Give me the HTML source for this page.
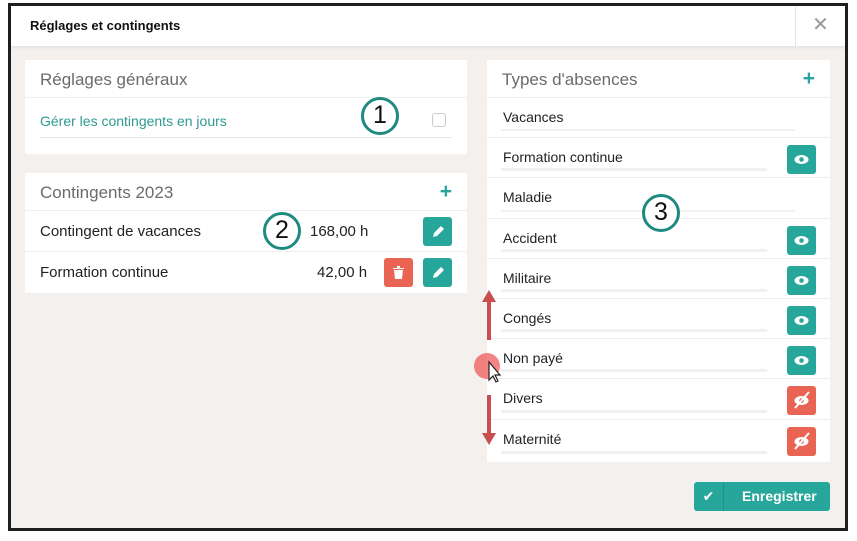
<!DOCTYPE html>
<html><head><meta charset="utf-8"><style>
*{box-sizing:border-box;margin:0;padding:0}
body{width:857px;height:541px;background:#fff;position:relative;font-family:"Liberation Sans","DejaVu Sans",sans-serif;overflow:hidden}
.frame{position:absolute;left:8px;top:3px;width:840px;height:528px;border:3px solid #1e1e1e;background:#f3f0ed}
.hdr{position:absolute;left:0;top:0;right:0;height:40px;background:#fff;box-shadow:0 2px 3px rgba(0,0,0,.06)}
.hdr .t{position:absolute;left:19px;top:12px;font-size:13px;font-weight:bold;color:#111}
.hdr .x{position:absolute;right:0;top:0;width:50px;height:40px;border-left:1px solid #e6e6e6;color:#999;font-size:20px;text-align:center;line-height:38px;font-weight:bold}
.p{position:absolute;background:#fff}
.pt{height:38px;border-bottom:1px solid #eee;font-size:17px;color:#6b6b6b;padding:10px 15px;position:relative}
.plus{position:absolute;right:15px;top:7px;color:#27a79c;font-size:21px;font-weight:bold}
.row{height:41px;border-bottom:1px solid #eee;position:relative;font-size:15px;color:#222}
.row span.l{position:absolute;left:15px;top:12px}
.btn{position:absolute;width:29px;height:29px;border-radius:3px;background:#27a79c}
.red{background:#e96453}
.tr{height:40.2px;border-bottom:1px solid #eee;position:relative;font-size:14px;color:#222}
.tr span{position:absolute;left:16px;top:11px}
.tr .ul{position:absolute;left:14px;bottom:6px;height:3px;background:#f1f1f1;width:266px}
.tr .btn{right:14px;top:7px}
.circ{position:absolute;width:38px;height:38px;border:3px solid #1e8a80;border-radius:50%;background:#fff;font-size:25px;text-align:center;line-height:31px;color:#111}
</style></head><body>
<div class="frame">
<div class="hdr"><div class="t">Réglages et contingents</div><div class="x">✕</div></div>

<div class="p" style="left:14px;top:54px;width:442px;height:94px">
<div class="pt">Réglages généraux</div>
<div style="position:relative;height:55px">
<span style="position:absolute;left:15px;top:15px;font-size:14px;color:#2d9a90">Gérer les contingents en jours</span>
<div style="position:absolute;left:15px;right:15px;top:39px;height:1px;background:#e8e8e8"></div>
<div style="position:absolute;left:407px;top:15px;width:14px;height:14px;border:1px solid #ccc;border-radius:3px"></div>
</div></div>

<div class="p" style="left:14px;top:167px;width:442px;height:120px">
<div class="pt">Contingents 2023<span class="plus">+</span></div>
<div class="row"><span class="l">Contingent de vacances</span><span style="position:absolute;left:285px;top:12px">168,00 h</span>
<div class="btn" style="left:398px;top:6px"><svg width="29" height="29"><path d="M10 20l1-4 7-7 3 3-7 7z" fill="#fff"/></svg></div></div>
<div class="row" style="border:0"><span class="l">Formation continue</span><span style="position:absolute;left:292px;top:12px">42,00 h</span>
<div class="btn red" style="left:359px;top:6px"><svg width="29" height="29"><path d="M9 10h11v1H9zM13 8h3v2h-3zM10 12h9l-1 9h-7z" fill="#fff"/></svg></div>
<div class="btn" style="left:398px;top:6px"><svg width="29" height="29"><path d="M10 20l1-4 7-7 3 3-7 7z" fill="#fff"/></svg></div></div>
</div>

<div class="p" style="left:476px;top:54px;width:343px;height:402px">
<div class="pt" style="padding-left:15px">Types d'absences<span class="plus">+</span></div>
<div class="tr"><span>Vacances</span><div class="ul" style="width:294px;height:2px"></div></div>
<div class="tr"><span>Formation continue</span><div class="ul"></div><div class="btn"><svg width="29" height="29"><ellipse cx="14.5" cy="14.5" rx="7" ry="4.5" fill="#fff"/><circle cx="14.5" cy="14.5" r="2.3" fill="#27a79c"/></svg></div></div>
<div class="tr"><span>Maladie</span><div class="ul" style="width:294px;height:2px"></div></div>
<div class="tr"><span>Accident</span><div class="ul"></div><div class="btn"><svg width="29" height="29"><ellipse cx="14.5" cy="14.5" rx="7" ry="4.5" fill="#fff"/><circle cx="14.5" cy="14.5" r="2.3" fill="#27a79c"/></svg></div></div>
<div class="tr"><span>Militaire</span><div class="ul"></div><div class="btn"><svg width="29" height="29"><ellipse cx="14.5" cy="14.5" rx="7" ry="4.5" fill="#fff"/><circle cx="14.5" cy="14.5" r="2.3" fill="#27a79c"/></svg></div></div>
<div class="tr"><span>Congés</span><div class="ul"></div><div class="btn"><svg width="29" height="29"><ellipse cx="14.5" cy="14.5" rx="7" ry="4.5" fill="#fff"/><circle cx="14.5" cy="14.5" r="2.3" fill="#27a79c"/></svg></div></div>
<div class="tr"><span>Non payé</span><div class="ul"></div><div class="btn"><svg width="29" height="29"><ellipse cx="14.5" cy="14.5" rx="7" ry="4.5" fill="#fff"/><circle cx="14.5" cy="14.5" r="2.3" fill="#27a79c"/></svg></div></div>
<div class="tr"><span>Divers</span><div class="ul"></div><div class="btn red"><svg width="29" height="29"><ellipse cx="14.5" cy="14.5" rx="7" ry="4.5" fill="#fff"/><circle cx="14.5" cy="14.5" r="2.3" fill="#e96453"/><path d="M8 22L22 6" stroke="#fff" stroke-width="2"/></svg></div></div>
<div class="tr" style="border:0"><span>Maternité</span><div class="ul"></div><div class="btn red"><svg width="29" height="29"><ellipse cx="14.5" cy="14.5" rx="7" ry="4.5" fill="#fff"/><circle cx="14.5" cy="14.5" r="2.3" fill="#e96453"/><path d="M8 22L22 6" stroke="#fff" stroke-width="2"/></svg></div></div>
</div>

<div style="position:absolute;left:683px;top:476px;width:136px;height:29px;background:#27a79c;border-radius:3px;color:#fff;font-weight:bold;font-size:14px">
<div style="position:absolute;left:0;top:0;width:30px;height:29px;border-right:1px solid #229287;text-align:center;line-height:29px">✔</div>
<span style="position:absolute;left:48px;top:6px">Enregistrer</span></div>
</div>

<div class="circ" style="left:361px;top:97px">1</div>
<div class="circ" style="left:263px;top:212px">2</div>
<div class="circ" style="left:642px;top:194px">3</div>
<svg style="position:absolute;left:470px;top:285px" width="40" height="160">
<path d="M19 5l-7 12h5v38h4V17h5z" fill="#c94e4e"/>
<path d="M17 110h4v38h5l-7 12-7-12h5z" fill="#c94e4e"/>
<circle cx="17" cy="81" r="13" fill="#e33" opacity=".6"/>
<path d="M19 77v18l4-4 3 6 2-1-3-6h5z" fill="#fff" stroke="#222" stroke-width="1.2"/>
</svg>
</body></html>
